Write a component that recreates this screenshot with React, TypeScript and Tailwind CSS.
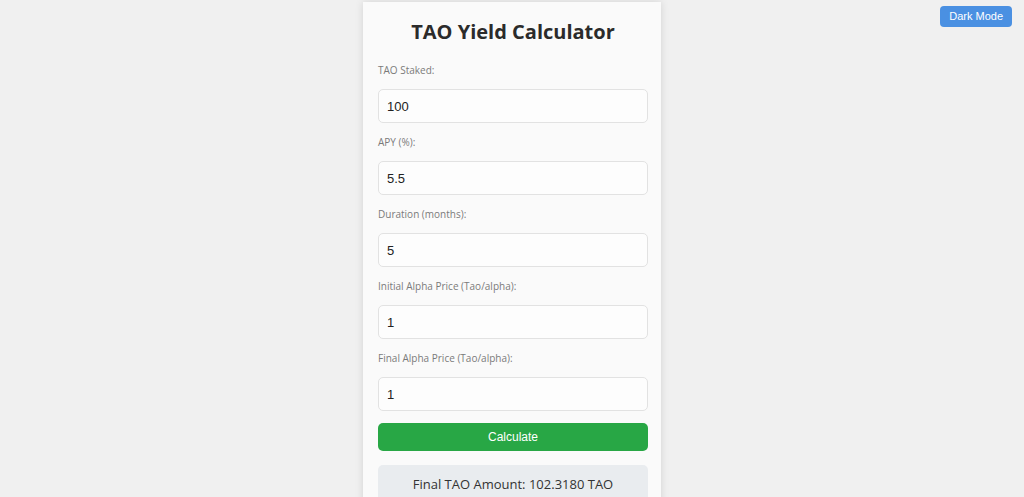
import React, { useState } from 'react';

const fields = [
  { label: 'TAO Staked:', value: '100' },
  { label: 'APY (%):', value: '5.5' },
  { label: 'Duration (months):', value: '5' },
  { label: 'Initial Alpha Price (Tao/alpha):', value: '1' },
  { label: 'Final Alpha Price (Tao/alpha):', value: '1' },
];

export default function App() {
  const [values, setValues] = useState(fields.map((f) => f.value));

  return (
    <div className="min-h-screen w-full bg-[#f0f0f0] relative overflow-hidden" style={{ fontFamily: '"Open Sans", "Noto Sans", sans-serif' }}>
      <button className="absolute top-[6px] right-[12px] h-[21px] px-[9px] rounded-[4px] bg-[#4a90e2] text-white text-[11px] font-['Liberation_Sans',Arial,sans-serif]">
        Dark Mode
      </button>

      <div className="mx-auto mt-[2px] w-[298px] bg-[#fafafa] shadow-[0_0_8px_rgba(0,0,0,0.12)] pl-[15px] pr-[13px] pt-[16px] pb-[20px]">
        <h1 className="text-center text-[20px] leading-[28px] font-bold text-[#2b2b2b]">
          TAO Yield Calculator
        </h1>

        <div className="mt-[17px] flex flex-col">
          {fields.map((f, i) => (
            <div key={f.label} className="flex flex-col">
              <label className="text-[10px] leading-[14px] text-[#7a7a7a] mb-[12px]">{f.label}</label>
              <input
                value={values[i]}
                onChange={(e) => {
                  const next = [...values];
                  next[i] = e.target.value;
                  setValues(next);
                }}
                className="h-[34px] w-full rounded-[5px] border border-[#e2e2e2] bg-[#fdfdfd] px-[8px] text-[13px] text-[#222] font-['Liberation_Sans',Arial,sans-serif] outline-none mb-[12px]"
              />
            </div>
          ))}
        </div>

        <button className="h-[28px] w-full rounded-[5px] bg-[#28a745] text-white text-[12px] font-['Liberation_Sans',Arial,sans-serif]">
          Calculate
        </button>

        <div className="mt-[14px] rounded-[5px] bg-[#e9ecef] h-[40px] flex items-center justify-center text-[13px] text-[#333]">
          Final TAO Amount: 102.3180 TAO
        </div>
      </div>
    </div>
  );
}
